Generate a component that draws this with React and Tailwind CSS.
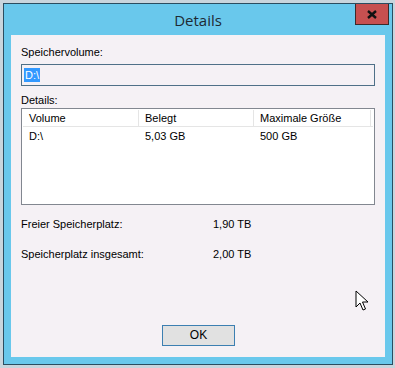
import React from "react";

const font = { fontFamily: '"Liberation Sans", Arial, sans-serif' };

const DetailsDialog = () => {
  return (
    <div className="w-[395px] h-[368px] bg-[#c9d5dd] pt-[3px] pl-[3px] overflow-hidden relative" style={font}>
      {/* Window frame */}
      <div className="w-[390px] h-[362px] border border-[#2b4d60] bg-[#69c8ec] flex flex-col">
        {/* Title bar */}
        <div className="relative h-[31px] flex items-center justify-center shrink-0">
          <span
            className="text-[15px] text-[#1e2a33] pt-[1px]"
            style={{ fontFamily: '"Open Sans", "Noto Sans", sans-serif' }}
          >
            Details
          </span>
          <button className="absolute right-[3px] top-0 w-[34px] h-[21px] bg-[#c75050] border border-[#3d2a2a] border-t-0 flex items-center justify-center">
            <svg width="10" height="9" viewBox="0 0 10 9">
              <path d="M1 1 L9 8 M9 1 L1 8" stroke="#111" strokeWidth="2.4" />
            </svg>
          </button>
        </div>

        {/* Client area */}
        <div className="mx-[7px] h-[322px] bg-[#f5f1f5] px-[10px] text-[11px] leading-[13px] text-black flex flex-col">
          <div className="mt-[11px]">Speichervolume:</div>
          <div className="mt-[5px] h-[22px] border border-[#4f7088] bg-[#f5f1f5] flex items-center px-[2px]">
            <span className="bg-[#3399ff] text-white px-[1px] leading-[14px]">D:\</span>
          </div>

          <div className="mt-[8px]">Details:</div>
          <div className="mt-[1px] h-[97px] border border-[#828790] bg-white p-[1px]">
            <div className="flex h-[17px] border-b border-[#e5e5e5]">
              <div className="w-[116px] border-r border-[#e5e5e5] pl-[6px] flex items-center">Volume</div>
              <div className="w-[115px] border-r border-[#e5e5e5] pl-[6px] flex items-center">Belegt</div>
              <div className="w-[117px] border-r border-[#e5e5e5] pl-[6px] flex items-center">Maximale Größe</div>
            </div>
            <div className="flex mt-[3px]">
              <div className="w-[116px] pl-[6px]">D:\</div>
              <div className="w-[115px] pl-[6px]">5,03 GB</div>
              <div className="w-[117px] pl-[6px]">500 GB</div>
            </div>
          </div>

          <div className="mt-[13px] flex">
            <span className="w-[192px]">Freier Speicherplatz:</span>
            <span>1,90 TB</span>
          </div>
          <div className="mt-[17px] flex">
            <span className="w-[192px]">Speicherplatz insgesamt:</span>
            <span>2,00 TB</span>
          </div>

          <div className="mt-auto mb-[11px] flex justify-center">
            <button className="w-[73px] h-[21px] border border-[#3c7fb1] bg-[#e1e1e1] text-[12px] ml-[1px]">
              OK
            </button>
          </div>
        </div>
      </div>

      {/* Mouse pointer */}
      <svg className="absolute left-[355px] top-[290px]" width="14" height="22" viewBox="0 0 14 22">
        <path
          d="M1 1 L1 17 L5 13 L8 20 L10.5 19 L7.5 12 L13 12 Z"
          fill="#fff"
          stroke="#000"
          strokeWidth="1"
          strokeLinejoin="miter"
        />
      </svg>
    </div>
  );
};

export default DetailsDialog;
